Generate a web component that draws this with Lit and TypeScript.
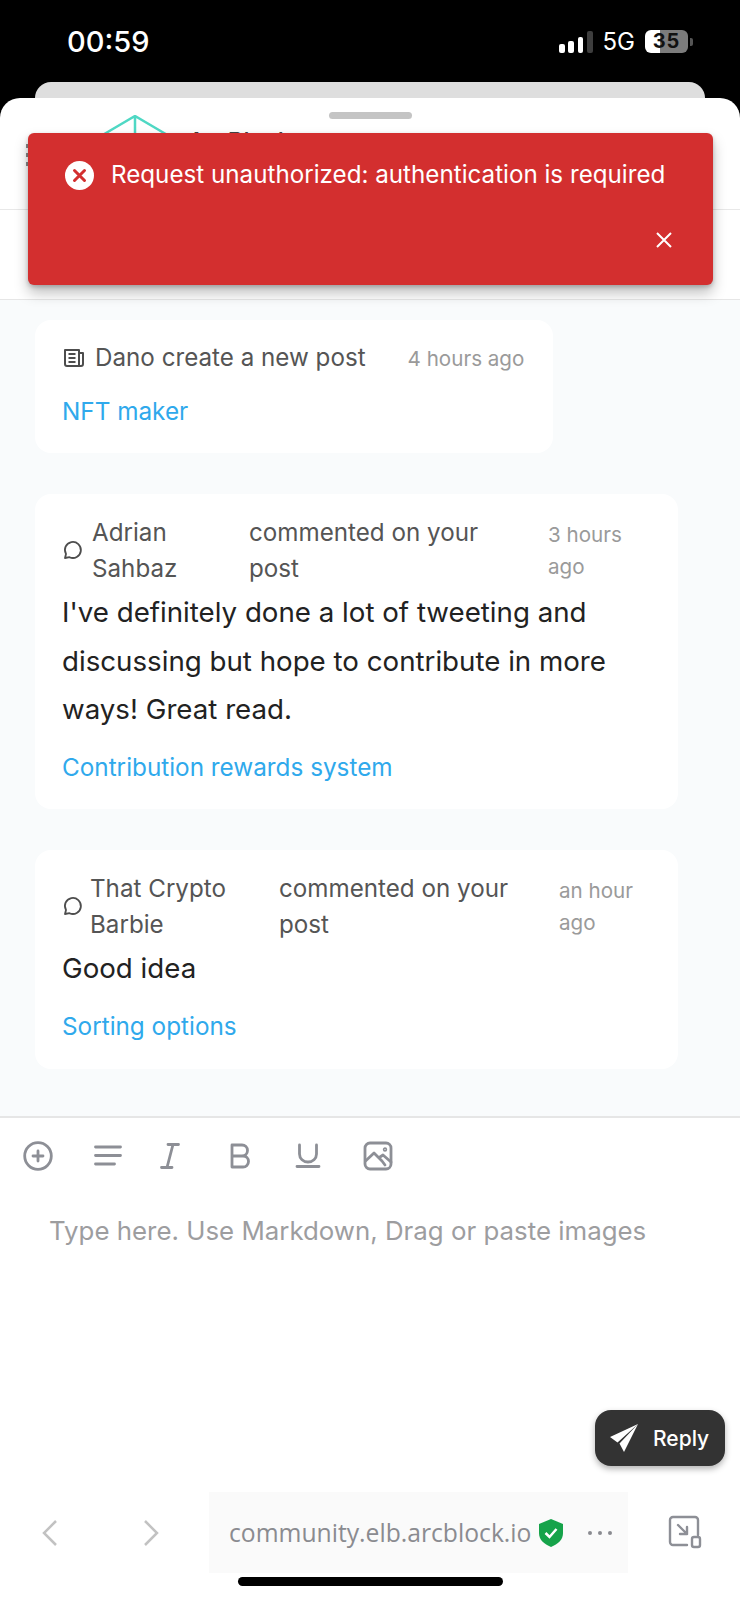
import { LitElement, html, css, svg } from "lit";
import { customElement } from "lit/decorators.js";

const toolIcons = [
  { gap: 39.5, icon: svg`<circle cx="15" cy="15" r="13.300" /><path d="M15 10v10M10 15h10" />` },
  { gap: 32.5, icon: svg`<path d="M2.500 6h25M2.500 14.500h25M2.500 23h19" />` },
  { gap: 39.5, icon: svg`<path d="M13 3.500h10.500M6.500 26.500H17M18 3.500l-6 23" />` },
  { gap: 38.5, icon: svg`<path d="M7 4h10a5.500 5.500 0 0 1 0 11H7zM7 15h11a5.500 5.500 0 0 1 0 11H7z" />` },
  { gap: 39.5, icon: svg`<path d="M6.500 4v9a8.500 8 0 0 0 17 0V4M4 25.500h22" />` },
  { gap: 0, icon: svg`<rect x="2" y="2" width="26" height="26" rx="5" /><path d="M2.500 20 11 12l8 8 3 4M17 16l3-2 8 7" /><circle cx="22" cy="8.500" r="0.800" />` },
];

@customElement("app-root")
export class AppRoot extends LitElement {
  static styles = css`
    :host {
      display: block;
      position: relative;
      width: 740px;
      height: 1600px;
      overflow: hidden;
      background: #000;
      font-family: Inter, "Noto Sans", sans-serif;
    }
    .screen { display: flex; flex-direction: column; height: 1600px; }
    .status {
      height: 82px;
      flex: none;
      display: flex;
      align-items: flex-start;
      justify-content: space-between;
      padding: 22px 0 0 67px;
      box-sizing: border-box;
      color: #fff;
    }
    .clock { font: 500 29px/40px Inter, sans-serif; }
    .status-right { display: flex; align-items: center; gap: 10px; padding-right: 47px; height: 39px; }
    .signal { display: flex; align-items: flex-end; gap: 3.800px; height: 22px; }
    .signal i { width: 5.500px; border-radius: 2px; background: #fff; display: block; }
    .signal i.off { background: #3e3e3e; }
    .net { font: 400 24px/30px Inter, sans-serif; }
    .battery { display: flex; align-items: center; gap: 2px; }
    .batt {
      width: 43px; height: 23px; border-radius: 6px;
      background: linear-gradient(90deg, #fff 0 34%, #7c7c7c 34%);
      color: #111; font: 700 20px/23px Inter, sans-serif; text-align: center;
      letter-spacing: 1px;
    }
    .nub { width: 3px; height: 8px; border-radius: 0 2px 2px 0; background: #555; }
    .peek {
      flex: none;
      height: 16px;
      margin: 0 35px;
      background: #dedede;
      border-radius: 18px 18px 0 0;
    }
    .sheet {
      flex: 1;
      min-height: 0;
      background: #fff;
      border-radius: 20px 20px 0 0;
      display: flex;
      flex-direction: column;
      position: relative;
    }
    .grab {
      position: absolute; top: 14px; left: 329px; width: 83px; height: 7px;
      border-radius: 4px; background: #c4c4c4;
    }
    .head {
      flex: none; height: 112px; box-sizing: border-box;
      border-bottom: 1px solid #e8e8e8;
      display: flex; align-items: flex-start; padding: 17px 0 0 26px;
      gap: 63px;
    }
    .menu { display: flex; flex-direction: column; gap: 5px; margin-top: 29px; width: 10px; }
    .menu i { height: 4px; background: #888; display: block; }
    .logo-wrap { display: flex; gap: 17px; align-items: flex-start; }
    .logo { width: 72px; height: 60px; color: #4fd8c4; }
    .brand { font: 500 24px/28px Inter, sans-serif; color: #444; margin-top: 13px; }
    .tabs { flex: none; height: 90px; border-bottom: 1px solid #e6e6e6; box-sizing: border-box; }
    .feed {
      flex: none;
      height: 818px;
      box-sizing: border-box;
      background: #f9fbfc;
      padding: 20px 62px 0 35px;
      display: flex;
      flex-direction: column;
      align-items: flex-start;
      gap: 41px;
      border-bottom: 2px solid #e6e6e6;
    }
    .card {
      background: #fff;
      border-radius: 16px;
      box-sizing: border-box;
      padding: 21px 27px 0;
      width: 643px;
    }
    .card.short { width: 518px; height: 133px; padding-top: 20px; }
    .card.c2 { height: 315px; }
    .card.c3 { height: 219px; }
    .row { display: flex; align-items: center; color: #555; font-size: 24.200px; line-height: 36px; }
    .row svg { flex: none; color: #4d4d4d; }
    .row .doc { margin: 0 10px 0 1px; }
    .name { flex: none; }
    .time { color: #9a9a9a; font-size: 20.600px; line-height: 32px; flex: none; }
    .time.inline { margin: 2px 0 0 42px; }
    .row.first { margin-bottom: 17px; }
    .body { color: #222; font-size: 27.700px; line-height: 48.500px; margin-top: 1px; }
    .link { color: #2fa9ec; font-size: 24.300px; line-height: 36px; display: block; }
    .link.after { margin-top: 15.500px; }
    .editor { flex: 1; min-height: 0; background: #fff; display: flex; flex-direction: column; position: relative; }
    .tools { display: flex; align-items: center; padding: 23px 0 0 23px; color: #8d8f96; }
    .tools svg { flex: none; width: 30px; height: 30px; fill: none; stroke: currentColor; stroke-width: 2.800; stroke-linecap: round; stroke-linejoin: round; }
    .ph { color: #9d9d9f; font-size: 25.850px; line-height: 36px; padding: 42px 0 0 49px; }
    .reply {
      position: absolute; left: 595px; top: 292px; width: 130px; height: 56px;
      background: #333; border-radius: 16px; color: #fff;
      display: flex; align-items: center; gap: 15px; padding-left: 15px; box-sizing: border-box;
      font-size: 21px; font-weight: 500;
      box-shadow: 0 3px 6px rgba(0,0,0,.3);
    }
    .browser { position: absolute; left: 0; right: 0; top: 1492px; height: 81px; }
    .url {
      position: absolute; left: 209px; width: 419px; top: 0; height: 81px;
      background: #fafafa; display: flex; align-items: center; gap: 7px; padding-left: 20px; box-sizing: border-box;
      color: #8a8b90; font: 500 24.700px/30px "Open Sans", Lato, sans-serif;
    }
    .dots { margin-left: 16px; }
    .nav { position: absolute; top: 27px; color: #c2c2c2; }
    .nav.back { left: 41px; }
    .nav.fwd { left: 142px; }
    .ext { position: absolute; left: 668px; top: 23px; color: #8d8f96; }
    .home { position: absolute; left: 238px; top: 1577px; width: 265px; height: 9px; border-radius: 5px; background: #000; }
    .toast {
      position: absolute; left: 28px; top: 133px; width: 685px; height: 152px;
      background: #d32f2f; border-radius: 6px; color: #fff;
      box-shadow: 0 8px 14px rgba(0,0,0,.25), 0 2px 4px rgba(0,0,0,.2);
      font-size: 24.200px; line-height: 36px;
    }
    .toast-msg { display: flex; align-items: center; gap: 17px; padding: 24px 0 0 37px; }
    .toast-x { position: absolute; right: 41px; top: 99px; }
  `;

  private signal() {
    return html`<div class="signal">
      <i style="height:9px"></i><i style="height:12px"></i><i style="height:16px"></i><i class="off" style="height:22px"></i>
    </div>`;
  }

  private bubble(margin: number) {
    return html`<svg width="22" height="22" viewBox="0 0 22 22" fill="none" stroke="currentColor" stroke-width="1.800" style="margin-right:${margin}px"><path d="M3 18l1-4a8 8 0 1 1 3.500 3.200z" stroke-linejoin="round" /></svg>`;
  }

  private head(margin: number, name: string[], nw: number, aw: number, time: string[]) {
    return html`<div class="row">
      ${this.bubble(margin)}
      <div class="name" style="width:${nw}px">${name.map((n) => html`${n}<br />`)}</div>
      <div class="name" style="width:${aw}px">commented on your<br />post</div>
      <div class="time">${time.map((n) => html`${n}<br />`)}</div>
    </div>`;
  }

  render() {
    return html`
      <div class="screen">
        <div class="status">
          <div class="clock">00:59</div>
          <div class="status-right">
            ${this.signal()}
            <div class="net">5G</div>
            <div class="battery"><div class="batt">35</div><div class="nub"></div></div>
          </div>
        </div>
        <div class="peek"></div>
        <div class="sheet">
          <div class="grab"></div>
          <div class="head">
            <div class="menu"><i></i><i></i><i></i></div>
            <div class="logo-wrap">
              <svg class="logo" viewBox="0 0 72 60" fill="none" stroke="currentColor" stroke-width="2.500"><path d="M-10 28 36 1l46 27M36 1v50" /></svg>
              <div class="brand">ArcBlock</div>
            </div>
          </div>
          <div class="tabs"></div>
          <div class="feed">
            <div class="card short">
              <div class="row first">
                <svg class="doc" width="22" height="22" viewBox="0 0 22 22" fill="none" stroke="currentColor" stroke-width="2">
                  <path d="M2 3h14v16H4a2 2 0 0 1-2-2zM16 6h4v11a2 2 0 0 1-2 2h-2M5.500 7h7M5.500 11h7M5.500 15h7" stroke-linejoin="round" />
                </svg>
                <span>Dano create a new post</span>
                <span class="time inline">4 hours ago</span>
              </div>
              <a class="link">NFT maker</a>
            </div>
            <div class="card c2">
              ${this.head(8, ["Adrian", "Sahbaz"], 157, 299, ["3 hours", "ago"])}
              <div class="body">I've definitely done a lot of tweeting and<br />discussing but hope to contribute in more<br />ways! Great read.</div>
              <a class="link after">Contribution rewards system</a>
            </div>
            <div class="card c3">
              ${this.head(6, ["That Crypto", "Barbie"], 189, 280, ["an hour", "ago"])}
              <div class="body">Good idea</div>
              <a class="link after">Sorting options</a>
            </div>
          </div>
          <div class="editor">
            <div class="tools">
              ${toolIcons.map((t) => html`<svg viewBox="0 0 30 30" style="margin-right:${t.gap}px">${t.icon}</svg>`)}
            </div>
            <div class="ph">Type here. Use Markdown, Drag or paste images</div>
            <div class="reply">
              <svg width="28" height="28" viewBox="0 0 28 28" fill="#fff"><path d="M28 0 0 13l7.500 5.500zM28 0 9.500 19.500 14 28z" /></svg>
              <span>Reply</span>
            </div>
          </div>
        </div>
      </div>
      <div class="browser">
        <svg class="nav back" width="18" height="28" viewBox="0 0 18 28" fill="none" stroke="currentColor" stroke-width="2.500"><path d="M15 2 3 14l12 12" /></svg>
        <svg class="nav fwd" width="18" height="28" viewBox="0 0 18 28" fill="none" stroke="currentColor" stroke-width="2.500"><path d="M3 2l12 12L3 26" /></svg>
        <div class="url">
          <span>community.elb.arcblock.io</span>
          <svg width="26" height="28" viewBox="0 0 26 28"><path d="M13 0 25 5v9c0 7-5 11-12 14C6 25 1 21 1 14V5z" fill="#16a34a" /><path d="M7.500 14l4 4 7-8" fill="none" stroke="#fff" stroke-width="2.500" /></svg>
          <svg class="dots" width="26" height="6" viewBox="0 0 26 6" fill="#8a8b90"><circle cx="3" cy="3" r="2" /><circle cx="13" cy="3" r="2" /><circle cx="23" cy="3" r="2" /></svg>
        </div>
        <svg class="ext" width="34" height="34" viewBox="0 0 34 34" fill="none" stroke="currentColor" stroke-width="2.400" stroke-linejoin="round" stroke-linecap="round">
          <path d="M19 30H5a3 3 0 0 1-3-3V5a3 3 0 0 1 3-3h22a3 3 0 0 1 3 3v15" /><path d="M10 10l9 9M19 12v7h-7" /><rect x="24" y="22" width="8" height="10" rx="2" />
        </svg>
      </div>
      <div class="home"></div>
      <div class="toast">
        <div class="toast-msg">
          <svg width="29" height="29" viewBox="0 0 29 29"><circle cx="14.500" cy="14.500" r="14.500" fill="#fff" /><path d="M9.500 9.500l10 10M19.500 9.500l-10 10" stroke="#d32f2f" stroke-width="3" stroke-linecap="round" /></svg>
          <span>Request unauthorized: authentication is required</span>
        </div>
        <svg class="toast-x" width="16" height="16" viewBox="0 0 16 16" stroke="#fff" stroke-width="2"><path d="M1 1l14 14M15 1 1 15" /></svg>
      </div>
    `;
  }
}
